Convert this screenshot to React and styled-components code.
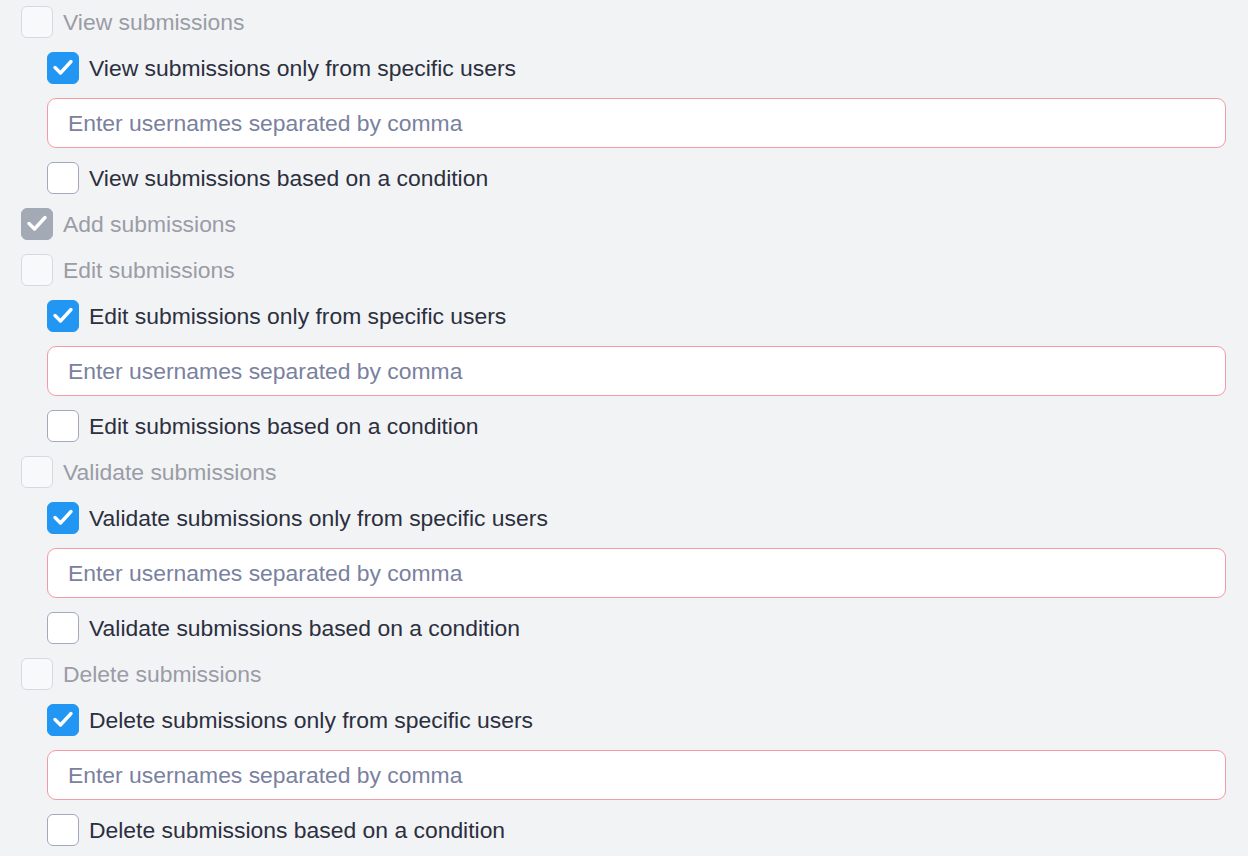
import React from "react";
import styled, { createGlobalStyle } from "styled-components";

const GlobalStyle = createGlobalStyle`
  html, body {
    margin: 0;
    padding: 0;
    background: #f2f3f5;
  }
  body {
    font-family: "Liberation Sans", Arial, sans-serif;
  }
`;

const permissions = ["View", "Add", "Edit", "Validate", "Delete"];

const Check = () => (
  <svg width="22" height="22" viewBox="0 0 22 22">
    <path
      d="M3 10.5 L8.5 16 L19 4.5"
      fill="none"
      stroke="#fff"
      strokeWidth="3.4"
      strokeLinecap="round"
      strokeLinejoin="round"
    />
  </svg>
);

const CheckRow = ({ label, checked, disabled, indent }) => {
  return (
    <Row $indent={indent}>
      <Box $checked={checked} $disabled={disabled}>
        {checked && <Check />}
      </Box>
      <Label $disabled={disabled}>{label}</Label>
    </Row>
  );
};

const App = () => {
  return (
    <>
      <GlobalStyle />
      <Wrapper>
        {permissions.map((p) => {
          const verb = p;
          if (p === "Add") {
            return <CheckRow key={p} label="Add submissions" checked disabled />;
          }
          return (
            <React.Fragment key={p}>
              <CheckRow label={`${verb} submissions`} disabled />
              <CheckRow label={`${verb} submissions only from specific users`} checked indent />
              <Input placeholder="Enter usernames separated by comma" />
              <CheckRow label={`${verb} submissions based on a condition`} indent />
            </React.Fragment>
          );
        })}
      </Wrapper>
    </>
  );
};

const Wrapper = styled.div`
  display: flex;
  flex-direction: column;
  gap: 14px;
  padding: 6px 22px 20px 21px;
`;

const Row = styled.label`
  display: flex;
  align-items: center;
  gap: 10px;
  height: 32px;
  margin-left: ${(p) => (p.$indent ? "26px" : "0")};
`;

const Box = styled.span`
  box-sizing: border-box;
  width: 32px;
  height: 32px;
  flex-shrink: 0;
  border-radius: 6px;
  display: flex;
  align-items: center;
  justify-content: center;
  border: 1px solid
    ${(p) =>
      p.$checked ? (p.$disabled ? "#a4a9b6" : "#2196f3") : p.$disabled ? "#d6d9e2" : "#a3a8bf"};
  background: ${(p) =>
    p.$checked ? (p.$disabled ? "#a4a9b6" : "#2196f3") : p.$disabled ? "#f8f9fb" : "#ffffff"};
`;

const Label = styled.span`
  font-size: 22.9px;
  line-height: 32px;
  color: ${(p) => (p.$disabled ? "#9a9ca6" : "#2b2f3e")};
  white-space: nowrap;
`;

const Input = styled.input`
  box-sizing: border-box;
  margin-left: 26px;
  height: 50px;
  border: 1px solid #f49aa4;
  border-radius: 9px;
  background: #fff;
  padding: 0 20px;
  font-family: "Liberation Sans", Arial, sans-serif;
  font-size: 22.9px;
  color: #2b2f3e;
  outline: none;

  &::placeholder {
    color: #7a819f;
  }
`;

export default App;
